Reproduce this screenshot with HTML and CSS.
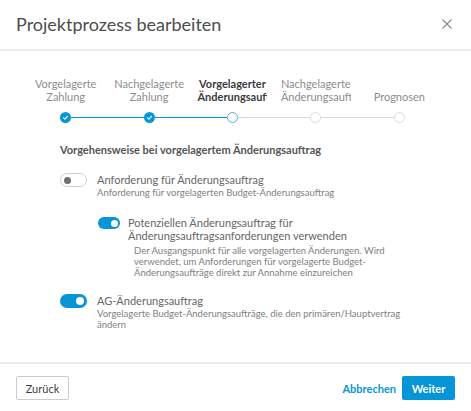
FILE: index.html
```html
<!DOCTYPE html>
<html lang="de">
<head>
<meta charset="utf-8">
<title>Projektprozess bearbeiten</title>
<link rel="stylesheet" href="styles.css">
</head>
<body>
<div class="dialog">
  <header class="header">
    <h1 class="title">Projektprozess bearbeiten</h1>
    <button class="close" aria-label="Schließen">
      <svg width="10" height="10" viewBox="0 0 10 10"><path d="M0.5 0.5 L9.5 9.5 M9.5 0.5 L0.5 9.5" stroke="#8a8a8a" stroke-width="1.1" fill="none"/></svg>
    </button>
  </header>

  <main class="body">
    <ol class="stepper">
      <li class="step">
        <span class="step-label"><span class="step-text">Vorgelagerte Zahlung</span></span>
        <span class="step-track">
          <span class="line line-none"></span>
          <span class="dot dot-done"><svg width="11" height="11" viewBox="0 0 11 11"><path d="M3.6 5.9 L4.9 7.1 L7.4 4.3" stroke="#fff" stroke-width="1.2" fill="none" stroke-linecap="round" stroke-linejoin="round"/></svg></span>
          <span class="line line-done"></span>
        </span>
      </li>
      <li class="step">
        <span class="step-label"><span class="step-text">Nachgelagerte Zahlung</span></span>
        <span class="step-track">
          <span class="line line-done"></span>
          <span class="dot dot-done"><svg width="11" height="11" viewBox="0 0 11 11"><path d="M3.6 5.9 L4.9 7.1 L7.4 4.3" stroke="#fff" stroke-width="1.2" fill="none" stroke-linecap="round" stroke-linejoin="round"/></svg></span>
          <span class="line line-done"></span>
        </span>
      </li>
      <li class="step step-current">
        <span class="step-label"><span class="step-text">Vorgelagerter Änderungsauftrag</span></span>
        <span class="step-track">
          <span class="line line-done"></span>
          <span class="dot dot-current"></span>
          <span class="line line-todo"></span>
        </span>
      </li>
      <li class="step">
        <span class="step-label"><span class="step-text">Nachgelagerter Änderungsauftrag</span></span>
        <span class="step-track">
          <span class="line line-todo"></span>
          <span class="dot dot-todo"></span>
          <span class="line line-todo"></span>
        </span>
      </li>
      <li class="step">
        <span class="step-label"><span class="step-text">Prognosen</span></span>
        <span class="step-track">
          <span class="line line-todo"></span>
          <span class="dot dot-todo"></span>
          <span class="line line-none"></span>
        </span>
      </li>
    </ol>

    <section class="options">
      <h2 class="section-title">Vorgehensweise bei vorgelagertem Änderungsauftrag</h2>

      <div class="option option-first">
        <span class="toggle toggle-off"><span class="knob"></span></span>
        <div class="option-text">
          <div class="option-label">Anforderung für Änderungsauftrag</div>
          <div class="option-desc">Anforderung für vorgelagerten Budget-Änderungsauftrag</div>
        </div>
      </div>

      <div class="option option-nested">
        <span class="toggle toggle-on toggle-small"><span class="knob"></span></span>
        <div class="option-text">
          <div class="option-label">Potenziellen Änderungsauftrag für Änderungsauftragsanforderungen verwenden</div>
          <div class="option-desc option-desc-indent">Der Ausgangspunkt für alle vorgelagerten Änderungen. Wird verwendet, um Anforderungen für vorgelagerte Budget-Änderungsaufträge direkt zur Annahme einzureichen</div>
        </div>
      </div>

      <div class="option option-last">
        <span class="toggle toggle-on"><span class="knob"></span></span>
        <div class="option-text">
          <div class="option-label">AG-Änderungsauftrag</div>
          <div class="option-desc">Vorgelagerte Budget-Änderungsaufträge, die den primären/Hauptvertrag ändern</div>
        </div>
      </div>
    </section>
  </main>

  <footer class="footer">
    <button class="btn btn-secondary">Zurück</button>
    <div class="footer-right">
      <button class="btn btn-link">Abbrechen</button>
      <button class="btn btn-primary">Weiter</button>
    </div>
  </footer>
</div>
</body>
</html>
```
FILE: styles.css
```css
* { box-sizing: border-box; }

html, body {
  margin: 0;
  padding: 0;
  background: #fff;
}

body {
  font-family: Lato, "Liberation Sans", sans-serif;
  color: #3c3c3c;
}

.dialog {
  width: 471px;
  height: 411px;
  display: flex;
  flex-direction: column;
  background: #fff;
}

/* Header */
.header {
  height: 51px;
  flex: none;
  display: flex;
  align-items: center;
  justify-content: space-between;
  padding: 0 19px 2px 16px;
  border-bottom: 2px solid #ececec;
}

.title {
  margin: 0;
  font-size: 18px;
  font-weight: 400;
  color: #4d4d4d;
}

.close {
  border: 0;
  background: none;
  padding: 0;
  width: 10px;
  height: 10px;
  display: flex;
}

/* Body */
.body {
  flex: 1;
  padding-top: 26px;
}

.stepper {
  list-style: none;
  margin: 0 0 0 24px;
  padding: 0;
  width: 417px;
  display: grid;
  grid-template-columns: repeat(5, 1fr);
}

.step {
  display: flex;
  flex-direction: column;
  align-items: center;
}

.step-label {
  width: 70px;
  height: 26px;
  overflow: hidden;
  display: flex;
  align-items: flex-end;
}

.step-text {
  display: block;
  width: 100%;
  text-align: center;
  font-size: 11px;
  line-height: 13px;
  color: #8c8c8c;
}

.step-current .step-text {
  color: #3c3c3c;
  font-weight: 700;
}

.step-track {
  margin-top: 9px;
  width: 100%;
  display: flex;
  align-items: center;
  height: 11px;
}

.line {
  flex: 1;
  height: 1px;
}

.line-none { background: transparent; }
.line-done { background: #0696d7; }
.line-todo { background: #d9d9d9; }

.dot {
  width: 11px;
  height: 11px;
  border-radius: 50%;
  flex: none;
  display: flex;
}

.dot-done { background: #0696d7; }
.dot-current { background: #fff; border: 1.5px solid #4fb3e4; }
.dot-todo { background: #fff; border: 1.5px solid #dcdcdc; }

/* Options */
.options {
  padding: 20px 60px 0 60px;
}

.section-title {
  margin: 0;
  font-size: 11px;
  line-height: 13px;
  font-weight: 700;
  color: #555;
}

.option {
  display: flex;
  align-items: flex-start;
  gap: 10px;
}

.option-first { margin-top: 17px; }
.option-nested { margin-top: 18px; margin-left: 38px; gap: 8px; }
.option-last { margin-top: 16px; }

.toggle {
  flex: none;
  width: 27px;
  height: 14px;
  border-radius: 7px;
  display: flex;
  align-items: center;
  padding: 0 3px;
}

.toggle-off {
  background: #fff;
  border: 1px solid #cfcfcf;
  justify-content: flex-start;
}

.toggle-off .knob {
  width: 7px;
  height: 7px;
  border-radius: 50%;
  background: #6f6f6f;
}

.toggle-on {
  background: #0696d7;
  justify-content: flex-end;
}

.toggle-on .knob {
  width: 8px;
  height: 8px;
  border-radius: 50%;
  background: #fff;
}

.toggle-small {
  width: 22px;
  height: 12px;
  border-radius: 6px;
  margin-top: 1px;
  padding: 0 2.5px;
}

.toggle-small .knob {
  width: 7px;
  height: 7px;
}

.option-text {
  flex: 1;
  min-width: 0;
}

.option-label {
  font-size: 11px;
  line-height: 13px;
  color: #666;
}

.option-desc {
  font-size: 9.5px;
  line-height: 11px;
  color: #808080;
  margin-top: 1px;
}

.option-desc-indent {
  padding-left: 6px;
  margin-top: 3px;
}

/* Footer */
.footer {
  flex: none;
  border-top: 2px solid #ececec;
  padding: 12px 16px 11px 16px;
  display: flex;
  justify-content: space-between;
  align-items: center;
}

.footer-right {
  display: flex;
  align-items: center;
  gap: 6px;
}

.btn {
  font-family: Lato, "Liberation Sans", sans-serif;
  font-size: 11px;
  height: 24px;
  border-radius: 2px;
  cursor: pointer;
}

.btn-secondary {
  width: 53px;
  background: #fff;
  border: 1px solid #cccccc;
  color: #3c3c3c;
}

.btn-link {
  background: none;
  border: 0;
  padding: 0;
  color: #0696d7;
  font-weight: 700;
}

.btn-primary {
  width: 53px;
  background: #0696d7;
  border: 0;
  color: #fff;
  font-weight: 700;
}
```
